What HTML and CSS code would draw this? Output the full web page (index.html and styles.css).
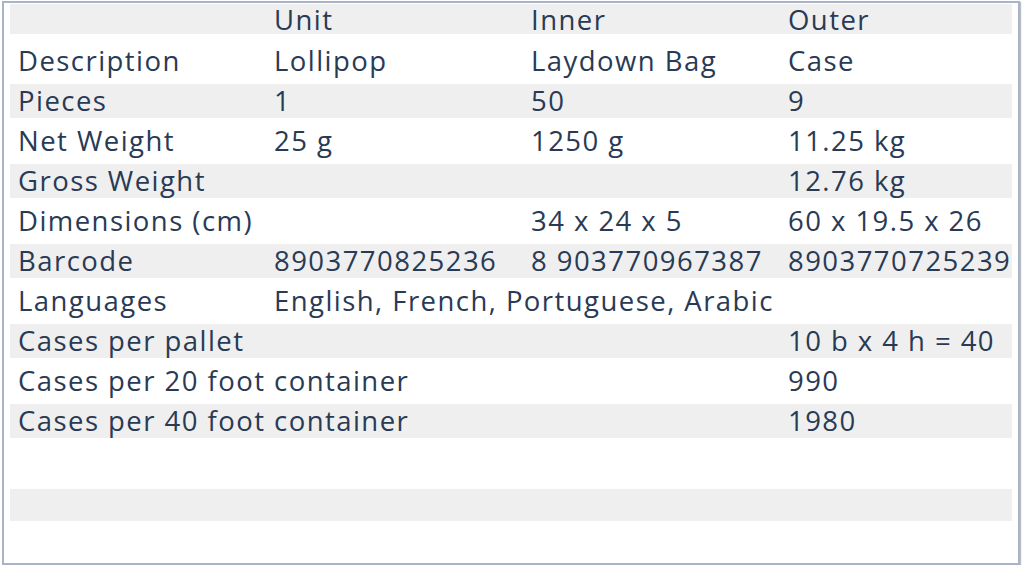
FILE: index.html
```html
<!DOCTYPE html>
<html lang="en">
<head>
<meta charset="utf-8">
<title>Product specifications</title>
<link rel="stylesheet" href="styles.css">
</head>
<body>
<div class="frame">
  <div class="row head alt">
    <div class="cell"></div>
    <div class="cell">Unit</div>
    <div class="cell">Inner</div>
    <div class="cell">Outer</div>
  </div>
  <div class="row first">
    <div class="cell">Description</div>
    <div class="cell">Lollipop</div>
    <div class="cell">Laydown Bag</div>
    <div class="cell">Case</div>
  </div>
  <div class="row alt">
    <div class="cell">Pieces</div>
    <div class="cell">1</div>
    <div class="cell">50</div>
    <div class="cell">9</div>
  </div>
  <div class="row">
    <div class="cell">Net Weight</div>
    <div class="cell">25 g</div>
    <div class="cell">1250 g</div>
    <div class="cell">11.25 kg</div>
  </div>
  <div class="row alt">
    <div class="cell">Gross Weight</div>
    <div class="cell"></div>
    <div class="cell"></div>
    <div class="cell">12.76 kg</div>
  </div>
  <div class="row">
    <div class="cell">Dimensions (cm)</div>
    <div class="cell"></div>
    <div class="cell">34 x 24 x 5</div>
    <div class="cell">60 x 19.5 x 26</div>
  </div>
  <div class="row alt">
    <div class="cell">Barcode</div>
    <div class="cell">8903770825236</div>
    <div class="cell">8 903770967387</div>
    <div class="cell">8903770725239</div>
  </div>
  <div class="row">
    <div class="cell">Languages</div>
    <div class="cell span3">English, French, Portuguese, Arabic</div>
  </div>
  <div class="row alt">
    <div class="cell span3l">Cases per pallet</div>
    <div class="cell">10 b x 4 h = 40</div>
  </div>
  <div class="row">
    <div class="cell span3l">Cases per 20 foot container</div>
    <div class="cell">990</div>
  </div>
  <div class="row alt">
    <div class="cell span3l">Cases per 40 foot container</div>
    <div class="cell">1980</div>
  </div>
  <div class="row blank"></div>
  <div class="row alt blank2"></div>
</div>
</body>
</html>
```
FILE: styles.css
```css
html, body {
  margin: 0;
  padding: 0;
  background: #ffffff;
}

body {
  font-family: "Open Sans", "Noto Sans", sans-serif;
  color: #293a55;
}

.frame {
  box-sizing: border-box;
  margin: 1px 0 0 2px;
  width: 1018px;
  height: 564px;
  border: 2px solid #a9b4ca;
  box-shadow: 1px 1px 1px rgba(60, 70, 90, 0.35);
  padding: 0 6px;
  background: #ffffff;
  overflow: hidden;
}

.row {
  display: grid;
  grid-template-columns: 256px 257px 257px 1fr;
  align-items: center;
  height: 40px;
  box-sizing: border-box;
  font-size: 27.5px;
  letter-spacing: 1.45px;
  white-space: nowrap;
}

.row.alt {
  background: linear-gradient(#efefef, #efefef) 0 3px / 100% 34px no-repeat;
}

.row.head {
  height: 33px;
  background-position: 0 1px;
  background-size: 100% 30px;
}

.row.first {
  height: 45px;
  padding-top: 5px;
}

.row.blank {
  height: 45px;
}

.row.blank2 {
  height: 38px;
  background-size: 100% 32px;
}

.cell {
  padding-left: 8px;
  line-height: 30px;
}

.span3 {
  grid-column: 2 / span 3;
}

.span3l {
  grid-column: 1 / span 3;
}
```
